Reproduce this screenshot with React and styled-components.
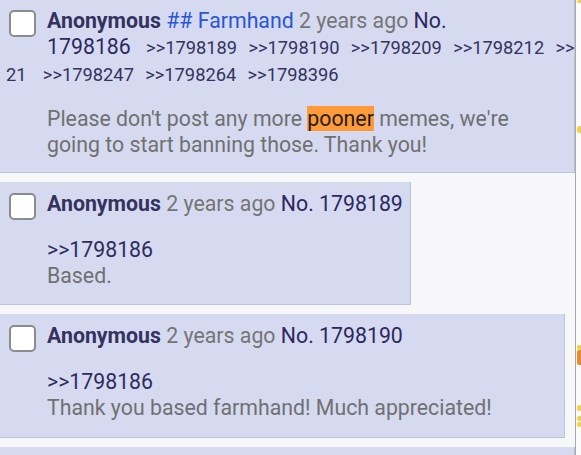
import React from "react";
import styled, { createGlobalStyle } from "styled-components";

const GlobalStyle = createGlobalStyle`
  html, body {
    margin: 0;
    padding: 0;
    background: #f7f7fa;
  }
  body {
    font-family: Roboto, "Noto Sans", sans-serif;
  }
`;

const Page = styled.div`
  display: flex;
  width: 581px;
  height: 455px;
  overflow: hidden;
`;

const Thread = styled.div`
  width: 575px;
  flex: none;
  display: flex;
  flex-direction: column;
  align-items: flex-start;
  gap: 9px;
  margin-top: -1px;
  overflow: hidden;
`;

const Post = styled.div`
  box-sizing: border-box;
  width: ${(p) => p.$width || "fit-content"};
  min-height: ${(p) => p.$minHeight || "0"};
  flex: none;
  background: #d6daf0;
  border-right: 1px solid #b7c5d9;
  border-bottom: 1px solid #b7c5d9;
  padding: 9px 7px ${(p) => p.$padBottom || "15px"} 6px;
  overflow: hidden;
`;

const Header = styled.div`
  font-size: 21.3px;
  line-height: 26px;
  white-space: nowrap;
`;

const Check = styled.span`
  float: left;
  box-sizing: border-box;
  width: 27px;
  height: 27px;
  margin: 2px 11px 0 3px;
  background: #fff;
  border: 2px solid #8c8c8c;
  border-radius: 5px;
`;

const Name = styled.span`
  font-weight: 700;
  color: #34325e;
`;

const Trip = styled.span`
  color: #2a55d6;
`;

const Time = styled.span`
  color: #757575;
`;

const PostNo = styled.span`
  color: #2c2860;
`;

const Backlink = styled.span`
  font-size: 18.3px;
  color: #34325e;
  margin-left: ${(p) => p.$gap || "6px"};
`;

const Body = styled.div`
  margin: ${(p) => p.$gap || "20px"} 0 0 41px;
  font-size: 21.3px;
  line-height: 26px;
  color: #707070;
`;

const Quote = styled.div`
  color: #2f2c5c;
`;

const Mark = styled.span`
  background: #ff9a38;
  color: #1e1e1e;
`;

const Scrollbar = styled.div`
  position: relative;
  flex: 1;
  border-left: 1px solid #a8a8ac;
  background: #fbfbfc;
`;

const Marker = styled.span`
  position: absolute;
  left: 1px;
  right: 0;
  border-radius: 2px 0 0 2px;
  background: ${(p) => p.$color};
`;

const markers = [
  { top: 0, height: 3, color: "#f3d24a" },
  { top: 126, height: 7, color: "#f3d24a" },
  { top: 345, height: 5, color: "#f3d24a" },
  { top: 350, height: 15, color: "#f0892a" },
  { top: 405, height: 6, color: "#f3d24a" },
  { top: 416, height: 5, color: "#f3d24a" },
  { top: 422, height: 5, color: "#f3d24a" },
];

const PostHeader = ({ no }) => (
  <Header>
    <Check />
    <Name>Anonymous</Name> <Time>2 years ago</Time>{" "}
    <PostNo>No. {no}</PostNo>
  </Header>
);

export default function App() {
  return (
    <>
      <GlobalStyle />
      <Page>
        <Thread>
          <Post $width="575px" $padBottom="14px">
            <Header>
              <Check />
              <Name>Anonymous</Name> <Trip>## Farmhand</Trip>{" "}
              <Time>2 years ago</Time> <PostNo>No.</PostNo>
              <br />
              <PostNo>1798186</PostNo>{" "}
              <Backlink $gap="10px">&gt;&gt;1798189</Backlink>{" "}
              <Backlink>&gt;&gt;1798190</Backlink>{" "}
              <Backlink>&gt;&gt;1798209</Backlink>{" "}
              <Backlink>&gt;&gt;1798212</Backlink>{" "}
              <Backlink>&gt;&gt;17982</Backlink>
              <br />
              <Backlink $gap="0">21</Backlink>{" "}
              <Backlink $gap="11px">&gt;&gt;1798247</Backlink>{" "}
              <Backlink>&gt;&gt;1798264</Backlink>{" "}
              <Backlink>&gt;&gt;1798396</Backlink>
            </Header>
            <Body $gap="18px">
              Please don't post any more <Mark>pooner</Mark> memes, we're
              <br />
              going to start banning those. Thank you!
            </Body>
          </Post>

          <Post>
            <PostHeader no="1798189" />
            <Body>
              <Quote>&gt;&gt;1798186</Quote>
              Based.
            </Body>
          </Post>

          <Post $width="565px" $padBottom="16px">
            <PostHeader no="1798190" />
            <Body>
              <Quote>&gt;&gt;1798186</Quote>
              Thank you based farmhand! Much appreciated!
            </Body>
          </Post>

          <Post $width="575px" $minHeight="40px" />
        </Thread>
        <Scrollbar>
          {markers.map((m, i) => (
            <Marker
              key={i}
              $color={m.color}
              style={{ top: m.top, height: m.height }}
            />
          ))}
        </Scrollbar>
      </Page>
    </>
  );
}
